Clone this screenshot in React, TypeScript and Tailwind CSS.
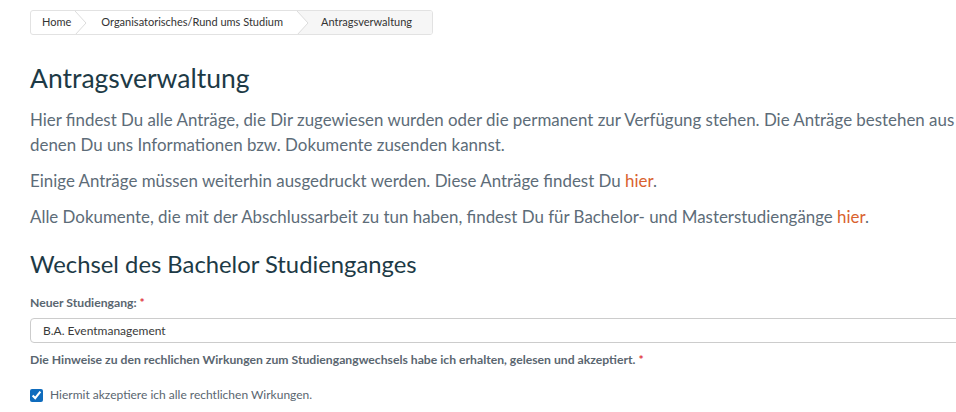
import React from 'react';

const crumbs = ['Home', 'Organisatorisches/Rund ums Studium', 'Antragsverwaltung'];

// thin arrow between breadcrumb items; fill paints the area right of the line
const Chevron = ({ fill }: { fill?: string }) => (
  <svg width="12" height="24" viewBox="0 0 12 24" className="shrink-0">
    {fill && <polygon points="0,0 11,12 0,24 12,24 12,0" fill={fill} />}
    <polyline points="0,0 11,12 0,24" fill="none" stroke="#dcdcdc" strokeWidth="1" />
  </svg>
);

const Breadcrumb = () => (
  <nav className="flex h-[25px] w-[403px] items-stretch overflow-hidden rounded-[3px] border border-[#e2e2e2] text-[11px] text-[#333]">
    <div className="flex items-center pl-[11px] pr-[4px]">{crumbs[0]}</div>
    <Chevron />
    <div className="flex items-center pl-[14px] pr-[14px] whitespace-nowrap">{crumbs[1]}</div>
    <Chevron fill="#f6f6f6" />
    <div className="flex flex-1 items-center bg-[#f6f6f6] pl-[12px]">{crumbs[2]}</div>
  </nav>
);

export default function App() {
  return (
    <div
      className="min-h-[412px] w-full overflow-hidden bg-white"
      style={{ fontFamily: 'Lato, "Open Sans", sans-serif' }}
    >
      <div className="w-[1100px] pl-[30px] pt-[10px]">
        <Breadcrumb />

        <h1 className="mt-[25px] text-[26.5px] leading-[36px] text-[#1d3a46]">Antragsverwaltung</h1>

        <div className="mt-[11px] space-y-[11px] text-[16.9px] leading-[25px] text-[#5d6c78]">
          <p className="whitespace-nowrap">
            Hier findest Du alle Anträge, die Dir zugewiesen wurden oder die permanent zur Verfügung stehen. Die Anträge bestehen aus
            <br />
            denen Du uns Informationen bzw. Dokumente zusenden kannst.
          </p>
          <p>
            Einige Anträge müssen weiterhin ausgedruckt werden. Diese Anträge findest Du{' '}
            <a href="#" className="text-[#d9622f]">hier</a>.
          </p>
          <p>
            Alle Dokumente, die mit der Abschlussarbeit zu tun haben, findest Du für Bachelor- und Masterstudiengänge{' '}
            <a href="#" className="text-[#d9622f]">hier</a>.
          </p>
        </div>

        <h2 className="mt-[19px] text-[23.8px] leading-[32px] text-[#1d3a46]">Wechsel des Bachelor Studienganges</h2>

        <form className="mt-[15px]">
          <label className="block text-[12.2px] font-bold leading-[16px] text-[#5a6670]">
            Neuer Studiengang: <span className="text-[#e0343c]">*</span>
          </label>
          <div className="mt-[7px] flex h-[25px] items-center rounded-[4px] border border-[#cccccc] pl-[12px] text-[12px] text-[#3a3a3a]">
            B.A. Eventmanagement
          </div>
          <p className="mt-[9px] text-[12.2px] font-bold leading-[16px] text-[#5a6670]">
            Die Hinweise zu den rechlichen Wirkungen zum Studiengangwechsels habe ich erhalten, gelesen und akzeptiert.{' '}
            <span className="text-[#e0343c]">*</span>
          </p>
          <label className="mt-[18px] flex items-center gap-[7px] text-[12px] text-[#5a6670]">
            <input type="checkbox" defaultChecked className="m-0 h-[13px] w-[13px] accent-[#0f6cbd]" />
            Hiermit akzeptiere ich alle rechtlichen Wirkungen.
          </label>
        </form>
      </div>
    </div>
  );
}
